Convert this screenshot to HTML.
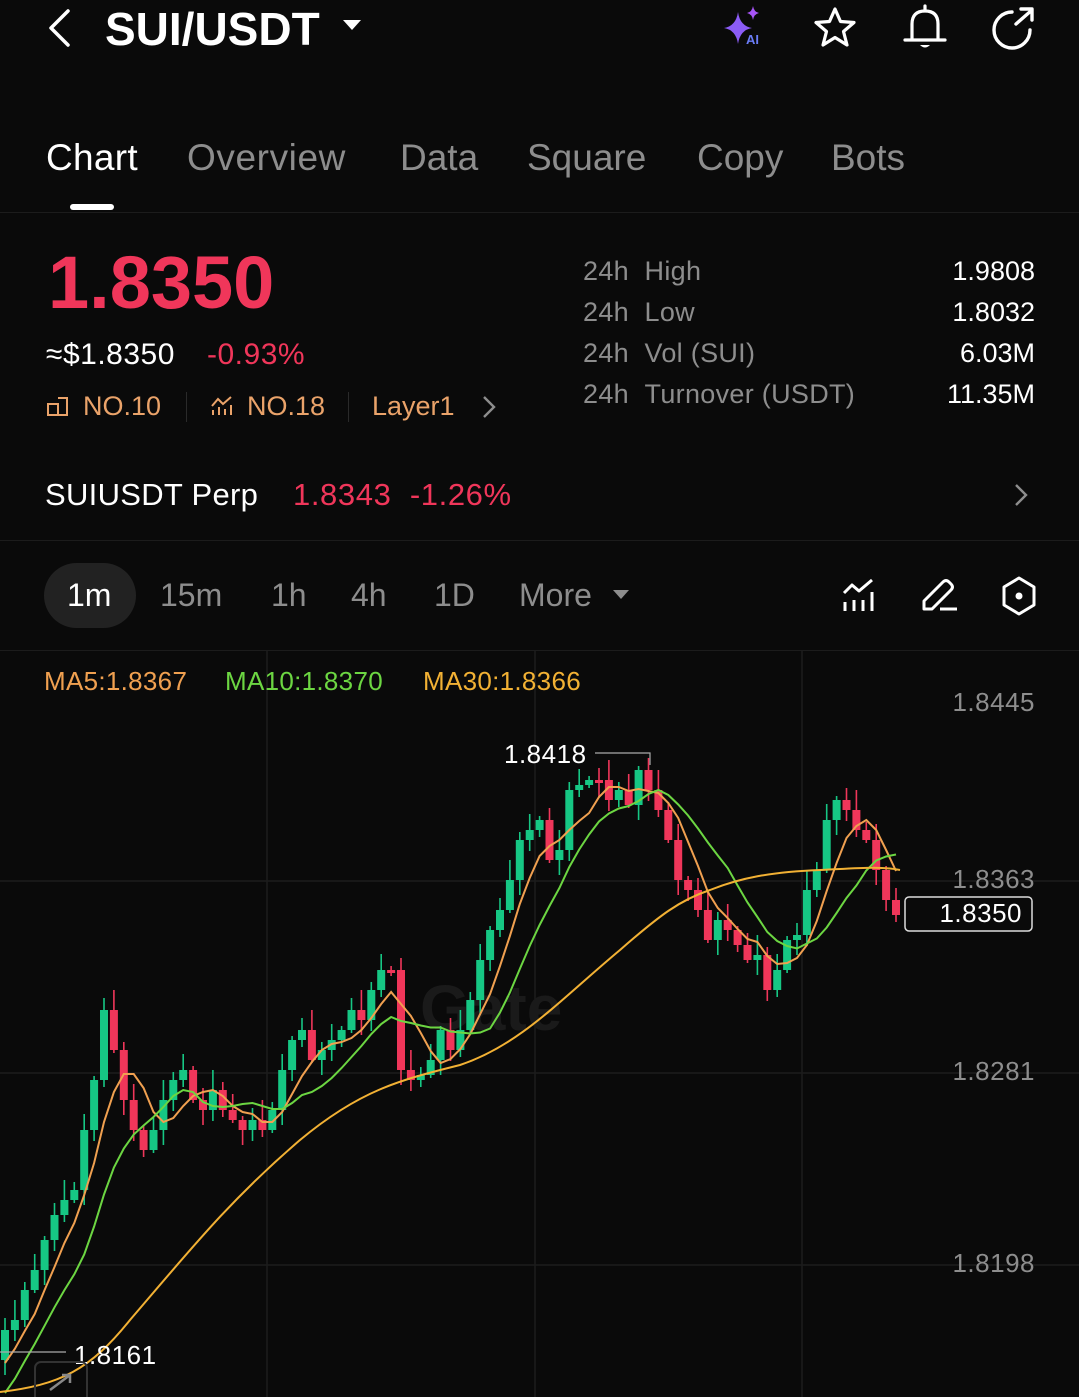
<!DOCTYPE html>
<html><head><meta charset="utf-8">
<style>
*{margin:0;padding:0;box-sizing:border-box}
body{width:1079px;height:1397px;background:#0a0a0a;color:#fff;font-family:"Liberation Sans",Arial,sans-serif;position:relative;overflow:hidden}
.a{position:absolute;white-space:nowrap}
.g{color:#8d8d8d}
.r{color:#f0365a}
.o{color:#eaa36a}
.hl{position:absolute;left:0;width:1079px;height:1px;background:#1c1c1c}
</style></head><body>
<svg class="a" style="left:44px;top:8px" width="30" height="42" viewBox="0 0 30 42"><path d="M24 3 L7 20 L24 37" fill="none" stroke="#fff" stroke-width="3.5" stroke-linecap="round" stroke-linejoin="round"/></svg>
<div class="a" style="left:105px;top:2px;font-size:46px;font-weight:bold;letter-spacing:0px">SUI/USDT</div>
<svg class="a" style="left:341px;top:18px" width="22" height="14"><path d="M2 2 L20 2 L11 12Z" fill="#fff"/></svg>
<svg class="a" style="left:720px;top:4px" width="48" height="46" viewBox="0 0 48 46"><path d="M18 8 Q20 22 32 24 Q20 26 18 40 Q16 26 4 24 Q16 22 18 8Z" fill="#8b5cf6"/><path d="M33 2 Q34 8 39 9 Q34 10 33 16 Q32 10 27 9 Q32 8 33 2Z" fill="#a855f7"/><text x="26" y="40" font-size="13" font-weight="bold" fill="#6a7cf6" font-family="Liberation Sans">AI</text></svg>
<svg class="a" style="left:810px;top:4px" width="50" height="48" viewBox="0 0 50 48"><path d="M25 5 L30.5 17.5 L44 18.5 L33.5 27.5 L37 41 L25 33.5 L13 41 L16.5 27.5 L6 18.5 L19.5 17.5Z" fill="none" stroke="#fff" stroke-width="3.2" stroke-linejoin="round"/></svg>
<svg class="a" style="left:900px;top:2px" width="50" height="52" viewBox="0 0 50 52"><path d="M25 4 V8 M12 38 V22 Q12 9 25 9 Q38 9 38 22 V38 Z M5 38 H45" fill="none" stroke="#fff" stroke-width="3.2" stroke-linejoin="round" stroke-linecap="round"/><path d="M20 43 Q25 48 30 43Z" fill="#fff"/></svg>
<svg class="a" style="left:988px;top:4px" width="50" height="48" viewBox="0 0 50 48"><path d="M24 8 A18 18 0 1 0 42 26" fill="none" stroke="#fff" stroke-width="3.4" stroke-linecap="round"/><path d="M28 20 L44 6 M33 5 H44 V16" fill="none" stroke="#fff" stroke-width="3.4" stroke-linecap="round" stroke-linejoin="round"/></svg>
<div class="a" style="left:46px;top:137px;font-size:37px;letter-spacing:0.3px">Chart</div>
<div class="a g" style="left:187px;top:137px;font-size:37px;letter-spacing:0.6px">Overview</div>
<div class="a g" style="left:400px;top:137px;font-size:37px">Data</div>
<div class="a g" style="left:527px;top:137px;font-size:37px">Square</div>
<div class="a g" style="left:697px;top:137px;font-size:37px">Copy</div>
<div class="a g" style="left:831px;top:137px;font-size:37px">Bots</div>
<div class="a" style="left:70px;top:204px;width:44px;height:6px;border-radius:3px;background:#fff"></div>
<div class="hl" style="top:212px"></div>
<div class="a r" style="left:48px;top:240px;font-size:74px;font-weight:bold;letter-spacing:0px">1.8350</div>
<div class="a" style="left:46px;top:338px;font-size:30px;letter-spacing:0.5px">≈$1.8350</div>
<div class="a r" style="left:207px;top:338px;font-size:30px;letter-spacing:0.5px">-0.93%</div>
<svg class="a" style="left:46px;top:394px" width="24" height="24" viewBox="0 0 24 24"><path d="M2 10 H12 V21 H2Z M12 4 H21 V21 H12" fill="none" stroke="#eaa36a" stroke-width="2"/></svg>
<div class="a o" style="left:83px;top:391px;font-size:27px">NO.10</div>
<div class="a" style="left:186px;top:392px;width:1px;height:30px;background:#2a2a2a"></div>
<svg class="a" style="left:210px;top:394px" width="26" height="24" viewBox="0 0 26 24"><path d="M2 12 L8 5 L13 10 L21 3 M3 16 V21 M9 13 V21 M15 15 V21 M21 11 V21" fill="none" stroke="#eaa36a" stroke-width="2"/></svg>
<div class="a o" style="left:247px;top:391px;font-size:27px">NO.18</div>
<div class="a" style="left:348px;top:392px;width:1px;height:30px;background:#2a2a2a"></div>
<div class="a o" style="left:372px;top:391px;font-size:27px">Layer1</div>
<svg class="a" style="left:480px;top:394px" width="18" height="26"><path d="M4 3 L14 13 L4 23" fill="none" stroke="#8d8d8d" stroke-width="2.4"/></svg>
<div class="a g" style="left:583px;top:251px;font-size:27px;line-height:41px;letter-spacing:0.3px">24h&nbsp;&nbsp;High<br>24h&nbsp;&nbsp;Low<br>24h&nbsp;&nbsp;Vol (SUI)<br>24h&nbsp;&nbsp;Turnover (USDT)</div>
<div class="a" style="right:44px;top:251px;font-size:27px;line-height:41px;text-align:right">1.9808<br>1.8032<br>6.03M<br>11.35M</div>
<div class="a" style="left:45px;top:477px;font-size:31px;letter-spacing:0.3px">SUIUSDT Perp</div>
<div class="a r" style="left:293px;top:477px;font-size:31px;letter-spacing:0.6px">1.8343&nbsp;&nbsp;-1.26%</div>
<svg class="a" style="left:1012px;top:482px" width="18" height="26"><path d="M4 3 L14 13 L4 23" fill="none" stroke="#8d8d8d" stroke-width="2.4"/></svg>
<div class="hl" style="top:540px"></div>
<div class="a" style="left:44px;top:563px;width:92px;height:65px;border-radius:33px;background:#222"></div>
<div class="a" style="left:67px;top:577px;font-size:32px">1m</div>
<div class="a g" style="left:160px;top:577px;font-size:32px">15m</div>
<div class="a g" style="left:271px;top:577px;font-size:32px">1h</div>
<div class="a g" style="left:351px;top:577px;font-size:32px">4h</div>
<div class="a g" style="left:434px;top:577px;font-size:32px">1D</div>
<div class="a g" style="left:519px;top:577px;font-size:32px">More</div>
<svg class="a" style="left:611px;top:588px" width="20" height="14"><path d="M2 2 L18 2 L10 11Z" fill="#8d8d8d"/></svg>
<svg class="a" style="left:840px;top:576px" width="38" height="40" viewBox="0 0 38 40"><path d="M4 17 L12 9 L19 15 L32 4 M5 26 V35 M14 24 V35 M23 24 V35 M32 16 V35" fill="none" stroke="#fff" stroke-width="3" stroke-linejoin="round"/></svg>
<svg class="a" style="left:920px;top:576px" width="40" height="40" viewBox="0 0 40 40"><path d="M4 32 V25 L23 6 Q26 3 29 6 L31 8 Q34 11 31 14 L12 33 H4Z M20 33 H37" fill="none" stroke="#fff" stroke-width="3" stroke-linejoin="round"/></svg>
<svg class="a" style="left:998px;top:574px" width="42" height="44" viewBox="0 0 42 44"><path d="M21 4 L36 13 V31 L21 40 L6 31 V13Z" fill="none" stroke="#fff" stroke-width="3" stroke-linejoin="round"/><circle cx="21" cy="22" r="3.5" fill="#fff"/></svg>
<div class="hl" style="top:650px"></div>
<svg id="ch" class="a" style="left:0;top:651px" width="1079" height="746" viewBox="0 651 1079 746">
<g stroke="#1c1c1c" stroke-width="1.5">
<line x1="0" y1="881" x2="1079" y2="881"/><line x1="0" y1="1073" x2="1079" y2="1073"/><line x1="0" y1="1265" x2="1079" y2="1265"/>
<line x1="267" y1="651" x2="267" y2="1397"/><line x1="535" y1="651" x2="535" y2="1397"/><line x1="802" y1="651" x2="802" y2="1397"/>
</g>
<text x="420" y="1030" font-size="64" font-weight="bold" fill="#1a1a1a" font-family="Liberation Sans">Gate</text>
<g id="cd"></g>
<path d="M0 1392 C60 1385 90 1370 130 1320 C190 1250 230 1200 300 1140 C360 1090 400 1080 460 1065 C520 1045 560 1000 620 950 C660 915 680 900 710 890 C740 878 770 872 820 870 C860 868 880 866 900 870" fill="none" stroke="#f2b134" stroke-width="2"/>
<g fill="#fff" font-family="Liberation Sans" font-size="26">
<text x="504" y="763" letter-spacing="0.5">1.8418</text>
<text x="74" y="1364" letter-spacing="0.5">1.8161</text>
</g>
<path d="M595 753 H650 V765 M0 1352 H66" stroke="#aaa" stroke-width="1.2" fill="none"/>
<g fill="#8d8d8d" font-family="Liberation Sans" font-size="26" text-anchor="end" letter-spacing="0.5">
<text x="1035" y="711">1.8445</text><text x="1035" y="888">1.8363</text><text x="1035" y="1080">1.8281</text><text x="1035" y="1272">1.8198</text>
</g>
<rect x="905" y="897" width="127" height="34" rx="4" fill="#0a0a0a" stroke="#ddd" stroke-width="1.5"/>
<text x="1022" y="922" fill="#fff" font-size="26" text-anchor="end" font-family="Liberation Sans" letter-spacing="0.5">1.8350</text>
<rect x="35" y="1362" width="52" height="50" rx="6" fill="none" stroke="#333" stroke-width="2"/>
<path d="M50 1390 L70 1375 M62 1375 H70 V1383" stroke="#888" stroke-width="2.5" fill="none"/>
</svg>
<div class="a" style="left:44px;top:666px;font-size:26px;color:#f0a050;letter-spacing:0.3px">MA5:1.8367</div>
<div class="a" style="left:225px;top:666px;font-size:26px;color:#6cd642;letter-spacing:0.3px">MA10:1.8370</div>
<div class="a" style="left:423px;top:666px;font-size:26px;color:#f2b134;letter-spacing:0.3px">MA30:1.8366</div>
<script>
var c=[1360,1330,1320,1290,1270,1240,1215,1200,1190,1130,1080,1010,1050,1100,1130,1150,1130,1100,1080,1070,1100,1110,1090,1110,1120,1130,1120,1130,1110,1070,1040,1030,1060,1050,1040,1030,1010,1020,990,970,970,1070,1080,1075,1060,1030,1050,1030,1000,960,930,910,880,840,830,820,860,850,790,785,780,780,800,790,805,770,790,810,840,880,890,910,940,920,930,945,960,955,990,970,940,935,890,870,820,800,810,830,840,870,900,915];
var G="#16c784",R="#f0365a",s="",N=c.length;
for(var i=1;i<N;i++){var x=5+(i-1)*9.9,o=c[i-1],cl=c[i],up=cl<o,t=Math.min(o,cl),b=Math.max(o,cl);if(b-t<3){b=t+3}
var col=up?G:R;var hw=((i*7)%5)*4+4;s+='<line x1="'+x+'" x2="'+x+'" y1="'+(t-hw)+'" y2="'+(b+((i*3)%4)*4+3)+'" stroke="'+col+'" stroke-width="1.6"/><rect x="'+(x-4)+'" y="'+t+'" width="8" height="'+(b-t)+'" fill="'+col+'"/>';}
function ma(n){var p="";for(var i=1;i<N;i++){var k=0,sum=0;for(var j=i;j>i-n&&j>=0;j--){sum+=c[j];k++}var v=sum/k+(k<n?(n-k)*6:0);p+=(i==1?"M":"L")+(5+(i-1)*9.9)+" "+v.toFixed(1)}return p}
s+='<path d="'+ma(5)+'" fill="none" stroke="#f0a050" stroke-width="2"/><path d="'+ma(10)+'" fill="none" stroke="#6cd642" stroke-width="2"/>';
document.getElementById("cd").innerHTML=s;
</script>
</body></html>
